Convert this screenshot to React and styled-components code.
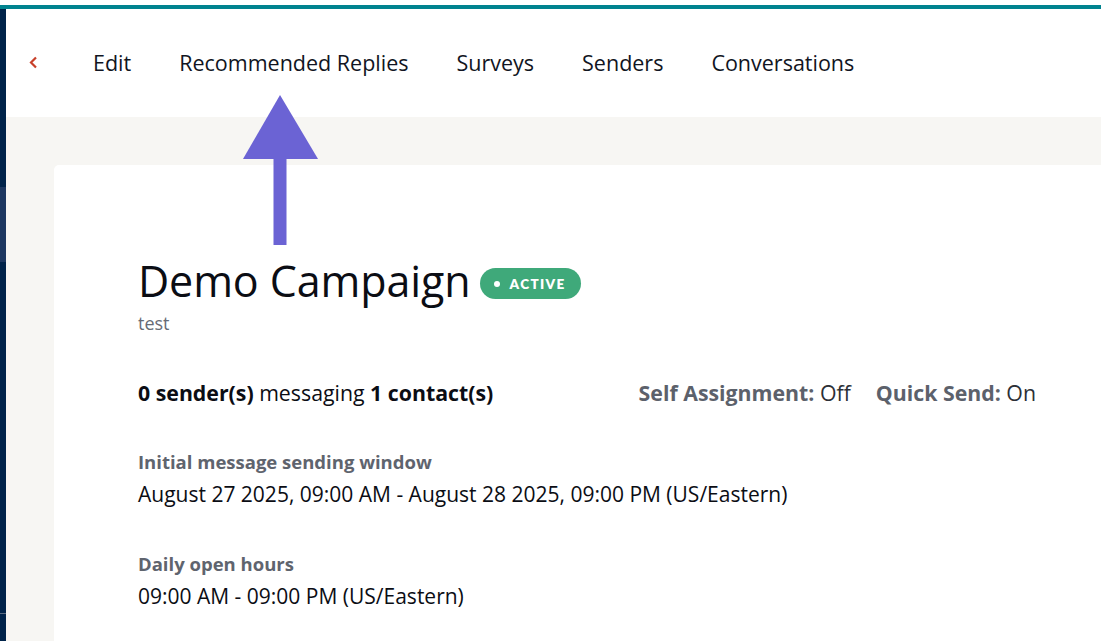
import React from "react";
import styled, { createGlobalStyle } from "styled-components";

const Global = createGlobalStyle`
  html, body { margin: 0; padding: 0; background: #ffffff; }
  body { font-family: "Open Sans", "Noto Sans", sans-serif; color: #111; overflow: hidden; }
  * { box-sizing: border-box; }
`;

const Page = styled.div`
  position: relative;
  width: 1101px;
  height: 641px;
  display: flex;
  flex-direction: column;
  overflow: hidden;
`;

const TopStrip = styled.div`
  height: 9px;
  flex: none;
  background: #ffffff;
  border-bottom: 4px solid #00838f;
`;

const Body = styled.div`
  flex: 1;
  display: flex;
  min-height: 0;
`;

const Sidebar = styled.div`
  width: 6px;
  flex: none;
  background: #00234a;
  display: flex;
  flex-direction: column;
`;

const SideGap = styled.div`
  height: ${(p) => p.$h}px;
  flex: none;
`;

const SideActive = styled.div`
  height: 75px;
  flex: none;
  background: #1d3760;
`;

const SideRule = styled.div`
  height: 1px;
  flex: none;
  background: #5a6b82;
`;

const Main = styled.div`
  flex: 1;
  display: flex;
  flex-direction: column;
  min-width: 0;
`;

const Nav = styled.nav`
  height: 108px;
  flex: none;
  background: #ffffff;
  display: flex;
  align-items: center;
  padding-left: 22px;
  padding-bottom: 1px;
`;

const Back = styled.span`
  display: flex;
  align-items: center;
  width: 10px;
  margin-right: 55px;
  color: #c8402a;
`;

const Tabs = styled.div`
  display: flex;
  gap: 48px;
`;

const Tab = styled.span`
  font-size: 21.5px;
  color: #111522;
  white-space: nowrap;
`;

const Content = styled.div`
  flex: 1;
  background: #f7f6f3;
  padding: 48px 0 0 48px;
  display: flex;
  min-height: 0;
`;

const Card = styled.section`
  flex: 1;
  background: #ffffff;
  border-top-left-radius: 5px;
  padding: 88px 65px 0 84px;
  display: flex;
  flex-direction: column;
`;

const TitleRow = styled.div`
  display: flex;
  align-items: center;
  gap: 10px;
  height: 56px;
`;

const Title = styled.h1`
  margin: 0;
  font-weight: 400;
  font-size: 43px;
  letter-spacing: -0.1px;
  line-height: 56px;
  color: #0b0d14;
`;

const Badge = styled.span`
  display: inline-flex;
  align-items: center;
  gap: 9px;
  height: 31px;
  padding: 0 15px 0 14px;
  margin-top: 5px;
  border-radius: 16px;
  background: #3fa97a;
  color: #ffffff;
  font-family: "Lato", sans-serif;
  font-weight: 800;
  font-size: 13.5px;
  letter-spacing: 1.4px;
`;

const Dot = styled.span`
  width: 6px;
  height: 6px;
  border-radius: 50%;
  background: #ffffff;
`;

const Subtitle = styled.div`
  margin-top: 2px;
  font-size: 18px;
  color: #676b75;
  line-height: 24px;
`;

const StatsRow = styled.div`
  margin-top: 45px;
  display: flex;
  justify-content: space-between;
  align-items: center;
  font-size: 21.3px;
  line-height: 26px;
  color: #0b0d14;
`;

const Strong = styled.b`
  font-weight: 700;
  color: ${(p) => (p.$muted ? "#5c616b" : "#0b0d14")};
`;

const Settings = styled.div`
  display: flex;
  gap: 25px;
  color: #2c2f36;
`;

const Field = styled.div`
  margin-top: ${(p) => p.$mt}px;
  display: flex;
  flex-direction: column;
  gap: 7px;
`;

const Label = styled.div`
  font-size: 18.5px;
  font-weight: 700;
  color: #5f646e;
  line-height: 24px;
`;

const Value = styled.div`
  font-size: 21px;
  line-height: 26px;
  color: #0b0d14;
`;

const ArrowOverlay = styled.svg`
  position: absolute;
  left: 243px;
  top: 95px;
  width: 75px;
  height: 150px;
`;

export default function App() {
  return (
    <>
      <Global />
      <Page>
        <TopStrip />
        <Body>
          <Sidebar>
            <SideGap $h={178} />
            <SideActive />
            <SideGap $h={351} />
            <SideRule />
          </Sidebar>
          <Main>
            <Nav>
              <Back>
                <svg width="10" height="13" viewBox="0 0 10 13" fill="none">
                  <path d="M8 1.5 L3 6.5 L8 11.5" stroke="currentColor" strokeWidth="2.2" />
                </svg>
              </Back>
              <Tabs>
                <Tab>Edit</Tab>
                <Tab>Recommended Replies</Tab>
                <Tab>Surveys</Tab>
                <Tab>Senders</Tab>
                <Tab>Conversations</Tab>
              </Tabs>
            </Nav>
            <Content>
              <Card>
                <TitleRow>
                  <Title>Demo Campaign</Title>
                  <Badge>
                    <Dot />
                    ACTIVE
                  </Badge>
                </TitleRow>
                <Subtitle>test</Subtitle>
                <StatsRow>
                  <span>
                    <Strong>0 sender(s)</Strong> messaging <Strong>1 contact(s)</Strong>
                  </span>
                  <Settings>
                    <span><Strong $muted>Self Assignment:</Strong> Off</span>
                    <span><Strong $muted>Quick Send:</Strong> On</span>
                  </Settings>
                </StatsRow>
                <Field $mt={44}>
                  <Label>Initial message sending window</Label>
                  <Value>August 27 2025, 09:00 AM - August 28 2025, 09:00 PM (US/Eastern)</Value>
                </Field>
                <Field $mt={45}>
                  <Label>Daily open hours</Label>
                  <Value>09:00 AM - 09:00 PM (US/Eastern)</Value>
                </Field>
              </Card>
            </Content>
          </Main>
        </Body>
        <ArrowOverlay viewBox="0 0 75 150">
          <polygon points="37,0 75,64 0,64" fill="#6b63d4" />
          <rect x="30.5" y="63" width="13" height="87" fill="#6b63d4" />
        </ArrowOverlay>
      </Page>
    </>
  );
}
